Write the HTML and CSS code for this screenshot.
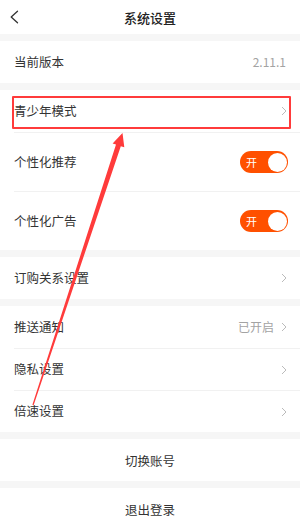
FILE: index.html
```html
<!DOCTYPE html>
<html lang="zh-CN">
<head>
<meta charset="utf-8">
<title>系统设置</title>
<link rel="stylesheet" href="styles.css">
</head>
<body>
<div class="page">
  <header class="nav">
    <span class="back">
      <svg width="10" height="14" viewBox="0 0 10 14"><path d="M8.5 1.2 L2.2 7 L8.5 12.8" fill="none" stroke="#333" stroke-width="1.3" stroke-linecap="round" stroke-linejoin="round"/></svg>
    </span>
    <h1 class="title">系统设置</h1>
  </header>

  <section class="group">
    <div class="row"><div class="row-body"><span class="label">当前版本</span><span class="value">2.11.1</span></div></div>
  </section>

  <section class="group">
    <div class="row"><div class="row-body"><span class="label">青少年模式</span><span class="chev"><svg width="6" height="10" viewBox="0 0 6 10"><path d="M1 1 L5 5 L1 9" fill="none" stroke="#bbb" stroke-width="1"/></svg></span></div></div>
    <div class="row"><div class="row-body tall"><span class="label">个性化推荐</span><span class="toggle"><span class="toggle-text">开</span><span class="knob"></span></span></div></div>
    <div class="row"><div class="row-body tall"><span class="label">个性化广告</span><span class="toggle"><span class="toggle-text">开</span><span class="knob"></span></span></div></div>
  </section>

  <section class="group">
    <div class="row"><div class="row-body"><span class="label">订购关系设置</span><span class="chev"><svg width="6" height="10" viewBox="0 0 6 10"><path d="M1 1 L5 5 L1 9" fill="none" stroke="#bbb" stroke-width="1"/></svg></span></div></div>
  </section>

  <section class="group">
    <div class="row"><div class="row-body"><span class="label">推送通知</span><span class="right"><span class="value">已开启</span><span class="chev"><svg width="6" height="10" viewBox="0 0 6 10"><path d="M1 1 L5 5 L1 9" fill="none" stroke="#bbb" stroke-width="1"/></svg></span></span></div></div>
    <div class="row"><div class="row-body"><span class="label">隐私设置</span><span class="chev"><svg width="6" height="10" viewBox="0 0 6 10"><path d="M1 1 L5 5 L1 9" fill="none" stroke="#bbb" stroke-width="1"/></svg></span></div></div>
    <div class="row"><div class="row-body"><span class="label">倍速设置</span><span class="chev"><svg width="6" height="10" viewBox="0 0 6 10"><path d="M1 1 L5 5 L1 9" fill="none" stroke="#bbb" stroke-width="1"/></svg></span></div></div>
  </section>

  <section class="group">
    <div class="action">切换账号</div>
  </section>

  <section class="group">
    <div class="action">退出登录</div>
  </section>

  <div class="highlight"></div>
  <svg class="arrow" width="300" height="525" viewBox="0 0 300 525">
    <polygon points="122.5,133 124.3,147.3 120.8,146.2 33.6,405.2 32.4,404.8 116,144.6 112.6,143.4" fill="#ff3b3b"/>
  </svg>
</div>
</body>
</html>
```
FILE: styles.css
```css
* { box-sizing: border-box; margin: 0; padding: 0; }
html, body { background: #f6f6f6; }
body {
  font-family: "Noto Sans CJK SC", "Noto Sans", sans-serif;
  color: #333;
  width: 300px;
  overflow: hidden;
}
.page {
  position: relative;
  width: 300px;
  min-height: 525px;
}
.nav {
  height: 34px;
  background: #fff;
  display: flex;
  align-items: center;
  justify-content: center;
  position: relative;
}
.back {
  position: absolute;
  left: 9px;
  top: 10px;
  width: 10px;
  height: 14px;
  display: flex;
}
.title {
  font-size: 13px;
  font-weight: 500;
  color: #222;
  line-height: 1;
}
.group {
  margin-top: 7px;
  background: #fff;
}
.row {
  padding-left: 14px;
}
.row-body {
  height: 42px;
  display: flex;
  align-items: center;
  justify-content: space-between;
  padding-right: 14px;
}
.row + .row .row-body {
  border-top: 1px solid #f1f1f1;
}
.row-body.tall {
  height: 59px;
  padding-right: 12px;
}
.label {
  font-size: 12.5px;
  line-height: 1;
  color: #333;
}
.value {
  font-size: 12px;
  color: #a3a3a3;
  line-height: 1;
}
.right {
  display: flex;
  align-items: center;
  gap: 7px;
}
.chev {
  display: flex;
  width: 6px;
  height: 10px;
  margin-right: -1px;
}
.toggle {
  width: 48px;
  height: 22px;
  border-radius: 11px;
  background: #ff5000;
  display: flex;
  align-items: center;
  justify-content: space-between;
  padding: 0 1.5px 0 6px;
}
.toggle-text {
  font-size: 11px;
  color: #fff;
  line-height: 1;
}
.knob {
  width: 19px;
  height: 19px;
  border-radius: 50%;
  background: #fff;
}
.action {
  height: 42px;
  display: flex;
  align-items: center;
  justify-content: center;
  font-size: 12.5px;
  color: #333;
}
.highlight {
  position: absolute;
  left: 12px;
  top: 96px;
  width: 279px;
  height: 33px;
  border: 2px solid #ff3b3b;
  border-radius: 1px;
}
.arrow {
  position: absolute;
  left: 0;
  top: 0;
  pointer-events: none;
}
```
